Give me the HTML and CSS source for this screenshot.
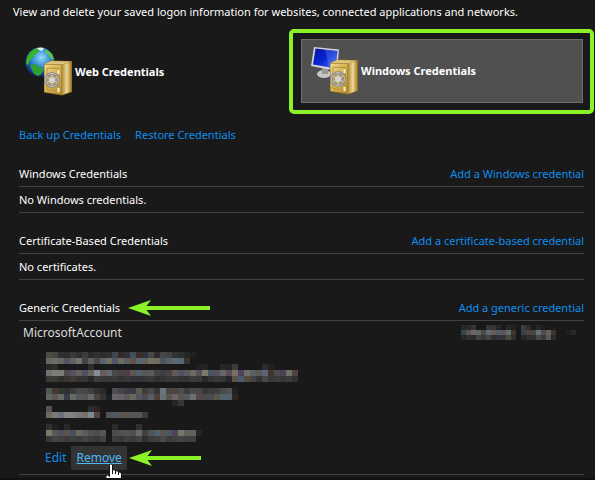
FILE: index.html
```
<!DOCTYPE html>
<html lang="en">
<head>
    <meta charset="UTF-8">
    <meta name="viewport" content="width=device-width, initial-scale=1.0">
    <title>Credential Manager</title>
    <link rel="stylesheet" href="styles.css">
</head>
<body>
    <!-- shared drawings -->
    <svg class="defs" width="0" height="0" aria-hidden="true">
        <defs>
            <linearGradient id="gold" x1="0" y1="0" x2="1" y2="1">
                <stop offset="0" stop-color="#f0dc8e"/>
                <stop offset="0.5" stop-color="#d6b250"/>
                <stop offset="1" stop-color="#b98f2e"/>
            </linearGradient>
            <linearGradient id="goldSide" x1="0" y1="0" x2="1" y2="0">
                <stop offset="0" stop-color="#b08a35"/>
                <stop offset="0.5" stop-color="#ecd998"/>
                <stop offset="1" stop-color="#a57c25"/>
            </linearGradient>
            <radialGradient id="sea" cx="0.55" cy="0.35" r="0.65">
                <stop offset="0" stop-color="#8fdcf8"/>
                <stop offset="0.5" stop-color="#3486d8"/>
                <stop offset="1" stop-color="#0c2a78"/>
            </radialGradient>
            <linearGradient id="screen" x1="0" y1="0" x2="1" y2="1">
                <stop offset="0" stop-color="#0414a0"/>
                <stop offset="0.5" stop-color="#0a24d4"/>
                <stop offset="1" stop-color="#4c7cf0"/>
            </linearGradient>
            <symbol id="safe" viewBox="0 0 30 36">
                <path d="M1 4 L8 0.5 L29 1 L29 32 L19 35.5 L1 32.5Z" fill="#8b6a1e"/>
                <path d="M1.5 4 L8 1 L28.5 1.5 L19 4.5Z" fill="#dcc47a"/>
                <path d="M19 4.5 L28.5 2 L28.5 31.5 L19 35Z" fill="url(#goldSide)"/>
                <path d="M1.5 4.5 L18.5 5 L18.5 34.5 L1.5 32Z" fill="url(#gold)"/>
                <path d="M4 8 L16 8.5 L16 31.5 L4 29.5Z" fill="none" stroke="#b8933c"/>
                <path d="M15.5 10v4M15.5 28v4" stroke="#f4eed8" stroke-width="2"/>
                <circle cx="9" cy="20" r="6.5" fill="#b49c5c" stroke="#808084" stroke-width="2.5"/>
                <circle cx="9" cy="20" r="6.5" fill="none" stroke="#c8c8cc" stroke-width="1"/>
                <path d="M9 14v12M3.5 17l11 6M3.5 23l11-6" stroke="#c8c8cc" stroke-width="1"/>
                <circle cx="9" cy="20" r="3" fill="#d4d4d8"/>
            </symbol>
            <symbol id="arrow" viewBox="0 0 82 16">
                <path d="M0 8 L23 0 L18.5 6 H82 V10 H18.5 L23 16Z" fill="#8cf228"/>
            </symbol>
            <symbol id="arrow-short" viewBox="0 0 72 16">
                <path d="M0 8 L23 0 L18.5 6 H72 V10 H18.5 L23 16Z" fill="#8cf228"/>
            </symbol>
        </defs>
    </svg>

    <main class="page">
        <p class="intro">View and delete your saved logon information for websites, connected applications and networks.</p>

        <div class="vaults">
            <button type="button" class="vault">
                <svg class="vault-icon" viewBox="0 0 48 50" aria-hidden="true">
                    <circle cx="15" cy="15" r="14.5" fill="url(#sea)"/>
                    <path d="M2 11 Q5 3 12 1 L15 3 L12 6 L9 8 L8 11 L5 13 L3 18 L1 17Z" fill="#36b424"/>
                    <path d="M5 18 L10 17 L15 20 L19 22 L16 27 L13 29 L9 27 L7 23Z" fill="#30a030"/>
                    <path d="M21 2 L27 7 L29 13 L26 12 L24 8 L20 5Z" fill="#5cc83c"/>
                    <path d="M12 1 Q16 0 19 1 L17 4 L14 3Z" fill="#e4f4fa"/>
                    <use href="#safe" x="18" y="13" width="30" height="36"/>
                </svg>
                <span>Web Credentials</span>
            </button>
            <div class="highlight">
                <button type="button" class="vault vault-active">
                    <svg class="vault-icon" viewBox="0 0 48 50" aria-hidden="true">
                        <ellipse cx="13" cy="28" rx="7" ry="4" fill="#c8c8ca"/>
                        <path d="M11 22h6v6h-6z" fill="#98989c"/>
                        <path d="M3 1 L28 3.5 L26 25 L0 20Z" fill="#d4d4d8"/>
                        <path d="M4.5 2.5 L26.5 5 L24.5 22.5 L2 18.5Z" fill="url(#screen)"/>
                        <path d="M14 3.5 L26.5 5 L24.5 22.5 L18 21.5Z" fill="#6f9cf4" opacity="0.3"/>
                        <use href="#safe" x="18" y="13" width="30" height="36"/>
                    </svg>
                    <span>Windows Credentials</span>
                </button>
            </div>
        </div>

        <nav class="actions">
            <a href="#">Back up Credentials</a>
            <a href="#">Restore Credentials</a>
        </nav>

        <section class="group">
            <header class="group-head">
                <h2>Windows Credentials</h2>
                <a href="#">Add a Windows credential</a>
            </header>
            <p class="empty">No Windows credentials.</p>
        </section>

        <section class="group">
            <header class="group-head">
                <h2>Certificate-Based Credentials</h2>
                <a href="#">Add a certificate-based credential</a>
            </header>
            <p class="empty">No certificates.</p>
        </section>

        <section class="group">
            <header class="group-head">
                <h2>Generic Credentials</h2>
                <svg class="arrow" aria-hidden="true"><use href="#arrow"/></svg>
                <a href="#">Add a generic credential</a>
            </header>
            <div class="account">
                <div class="account-head">
                    <span>MicrosoftAccount</span>
                    <svg class="mosaic" id="modified" width="123" height="15" aria-hidden="true"></svg>
                </div>
                <svg class="mosaic" id="details" width="264" height="90" aria-hidden="true"></svg>
                <div class="account-actions">
                    <a href="#" class="edit">Edit</a>
                    <a href="#" class="remove">Remove
                        <svg class="cursor" viewBox="0 0 17 22" aria-hidden="true">
                            <path d="M4.500 2 Q6 -0.500 7.500 2 V7 Q9.500 6 10.500 8 Q12.500 7 13.500 9 Q16.500 8.500 16.500 11 V16 L14.500 22 H6 L1 15 Q0 12 2.500 12 L4.500 13.500Z" fill="#fff" stroke="#111"/>
                            <path d="M7.500 7v4M10.500 8v3M13.500 9v3" stroke="#111" fill="none"/>
                        </svg>
                    </a>
                    <svg class="arrow arrow-short" aria-hidden="true"><use href="#arrow-short"/></svg>
                </div>
            </div>
        </section>
    </main>

    <script>
        // Hidden values are drawn as coloured cells, "-" is an empty cell
        var details = [
            '- 4b4b45 444440 303030 2e2e2e 383838 2f2f2f 3c3c3c 2a2a2a 303030 2c2c2c 303030 40484f 322b28 303038 405060 3e2c24 2c3440 484848 2c2c2c 464646 3e4444 34322f 2c3030 262626 202020',
            '1b1a28 69675c 6c6c69 656565 585060 626260 727272 444448 63605a 48484a 566370 706e62 505868 6c6c62 585e62 625248 566872 62625a 76705f 6c6c60 4d545a 586068 606a70 526878 3c3028',
            '- 282828 2c2c2c - - - - - 2a2e32 - - - - - - - - - - - - - - - - - 202024 242426 - - 282828 242424 3c3c3c - - - - 2c2c30 202020',
            '1b1a28 72726c 7c7c7a 7a7a78 50484c 54505c 62605c 505064 68605a 7e8f98 685a5a 626a6c 484848 444444 503f4a 5c5850 50606a 56565a 5f5a56 444444 3c3c44 4b4248 625c58 505068 5a5a5a 6a6862 5a4e58 7e7c68 48545e 585060 686868 5a4c58 787064 50405c 706e6a 5c605e 5a5a5a 5c6278 42342f 4c4c4c 504054 6f6f6a 50443c',
            '- 3a3a32 3a3a36 303030 3a3430 3c3c3c 38332f 363436 282828 403c3a 383838 363636 3a3a3a 323232 383838 343434 303438 36343a 3a3a3a 303030 343434 383838 3c3838 343434 34322c 3c3c3c 3a3a3a 282828 343434 3c3838 343434 282828 5a5448 4c5c70 584c38 444444 343434 484848 3c3838 3c3c3c 363636 3a3a3a 303030',
            '',
            '1b1a28 4d5c52 4a3830 343434 303038 3a3e3a 484848 484646 3c4044 383030 2c2828 - 504c52 484444 3c3c4c 3a3a40 5a5850 403c38 484848 34383c 6c757c 50443f 484840 4c504c 3c3c3c 4a4a46 504440 343838 3c3c3c 3c4040 484c4c 505458 202020',
            '- 606660 585858 686868 3a3a48 686c60 505864 5a5448 606868 484444 38332f 1b1f28 6a6468 606068 5a5850 68685c 54565c 504852 54606a 504038 6a7076 585850 706070 58564c 505860 6e6e6e 504a4a 4a4a4a 484c50 5c5648 526070 526070 30221c',
            '- - - - - - - - - - - - - - - - - - - - - - 222828 383434',
            '- 56564e - - - - - - 2a2e32 30221c',
            '1b1a28 6c6b60 7a7a76 6a727e 828280 80807e 7a7876 7a7068 7c8a94 54443e - 4c545a 505860 5a5650 58544c 525858 50585c 443c34',
            '',
            '- 303030 202020 - 282828 - - - - - - - 2a2a2a - - - 303030',
            '1b1a28 7a7a68 585854 50505c 5c544c 485060 686860 5c5c58 505450 4c4c4c 585450 - 4c4c4c 50504c 545454 505050 706860 404040 505454 52606c 5c544c 4c5868 504258 76756a 62625c 62625c 242424',
            '- 3a3a34 444444 404040 3c3c3c 404040 3c3c3c 444444 3c3c3c 3a3a3a 424242 - 3c3c3c 383838 404040 3a3a3a 444444 303030 3c3c3c 404040 484850 3c3c3c 404040 444444 404040 404040'
        ];
        var modified = [
            '22282c 302824 363636 - - 363636 363636 262626 - 22282c 282020 - 3a4048 342c28 - 22282c 241c1c',
            '36424c 5c5456 686868 606660 504a44 606872 685a54 505c6c 5c5658 606e70 40342c - 36424c 504440 484848 607074 504850 686050 363636 - - 202020 282828 - -',
            '22282c 342c28 2c2c2c 444444 383838 444444 342c28 303440 3c3434 444c48 30302c - 22282c 302c2a 303030 444a48 3c3c3c 505c60 302824 - - - - - -'
        ];

        function drawCells(id, rows, size) {
            var svg = document.getElementById(id);
            rows.forEach(function (row, y) {
                row.split(' ').forEach(function (color, x) {
                    if (!color || color === '-') return;
                    var cell = document.createElementNS('http://www.w3.org/2000/svg', 'rect');
                    cell.setAttribute('x', x * size);
                    cell.setAttribute('y', y * size);
                    cell.setAttribute('width', size);
                    cell.setAttribute('height', size);
                    cell.setAttribute('fill', '#' + color);
                    svg.appendChild(cell);
                });
            });
        }

        drawCells('details', details, 6);
        drawCells('modified', modified, 5);
    </script>
</body>
</html>
```
FILE: styles.css
```
* {
    box-sizing: border-box;
    margin: 0;
    padding: 0;
}

body {
    min-height: 100vh;
    border-bottom: 2px solid #121012;
    background-color: #191919;
    color: #fff;
    font-family: "Noto Sans", sans-serif;
    font-size: 11px;
    line-height: 16px;
    overflow: hidden;
}

a {
    color: #0e8ef0;
    text-decoration: none;
}

.defs {
    position: absolute;
}

.page {
    padding: 4px 11px 0 19px;
}

.intro {
    margin-left: -6px;
    white-space: nowrap;
}

/* vault switcher */
.vaults {
    display: grid;
    grid-template-columns: 270px 1fr;
    align-items: center;
    margin: 9px -10px 0 0;
}

.vault {
    display: flex;
    align-items: center;
    gap: 2px;
    width: 100%;
    height: 64px;
    padding-left: 5px;
    border: 1px solid transparent;
    background: none;
    color: #fff;
    font: inherit;
    font-weight: bold;
    text-align: left;
}

.vault-active {
    padding-left: 9px;
    background-color: #505050;
    border-color: #6e6e6e;
}

.vault-icon {
    width: 48px;
    height: 50px;
}

.highlight {
    padding: 6px 7px 7px 8px;
    border: 4px solid #8cf228;
    border-radius: 5px;
}

.actions {
    display: flex;
    gap: 14px;
    margin: 13px 0 23px;
}

/* credential groups */
.group {
    margin-bottom: 20px;
}

.group:last-child {
    margin-bottom: 0;
}

.group-head {
    display: flex;
    align-items: center;
    padding-bottom: 4px;
    border-bottom: 1px solid #424242;
}

.group-head h2 {
    font-size: 11px;
    font-weight: normal;
}

.group-head a {
    margin-left: auto;
}

.empty {
    padding: 5px 0 4px;
    border-bottom: 1px solid #424242;
}

.arrow {
    width: 82px;
    height: 16px;
    margin-left: 8px;
}

.arrow-short {
    width: 72px;
    margin-left: 2px;
}

.account {
    padding: 4px 0 4px 4px;
    border-bottom: 1px solid #424242;
    font-size: 12px;
}

.account-head {
    display: flex;
    justify-content: space-between;
    color: #ddd;
}

.mosaic {
    display: block;
}

#details {
    margin: 11px 0 4px 17px;
}

.account-actions {
    display: flex;
    align-items: center;
    margin-left: 22px;
}

.remove {
    position: relative;
    margin-left: 5px;
    padding: 4px 5px;
    background-color: #333;
    border-radius: 1px;
    color: #4cb8f4;
    text-decoration: underline;
}

.cursor {
    position: absolute;
    left: 34px;
    top: 17px;
    width: 17px;
    height: 22px;
}
```
